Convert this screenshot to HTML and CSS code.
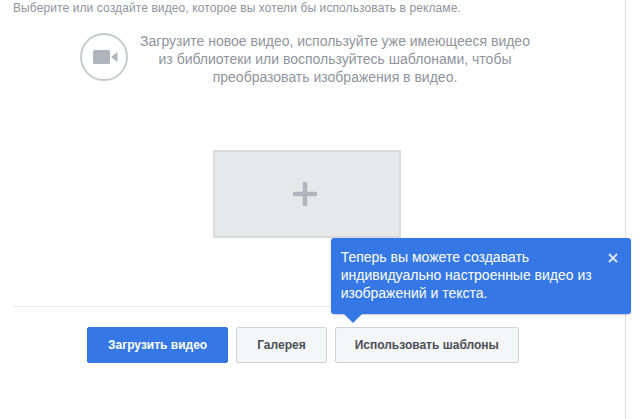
FILE: index.html
```html
<!DOCTYPE html>
<html lang="ru">
<head>
<meta charset="utf-8">
<title>Видео</title>
<link rel="stylesheet" href="styles.css">
</head>
<body>
<main class="panel">
  <p class="lead">Выберите или создайте видео, которое вы хотели бы использовать в рекламе.</p>
  <section class="intro">
    <div class="intro-icon">
      <svg width="48" height="48" viewBox="0 0 48 48" aria-hidden="true">
        <circle cx="24" cy="24" r="23" fill="none" stroke="#c4c7cc" stroke-width="1.8"/>
        <rect x="13" y="17" width="17" height="14" rx="1.5" fill="#b0b4bc"/>
        <path d="M31 24l6.500-5v10z" fill="#b0b4bc"/>
      </svg>
    </div>
    <p class="intro-text">Загрузите новое видео, используйте уже имеющееся видео<br>из библиотеки или воспользуйтесь шаблонами, чтобы<br>преобразовать изображения в видео.</p>
  </section>
  <div class="drop-wrap">
    <div class="drop">
      <svg width="24" height="24" viewBox="0 0 24 24" aria-hidden="true">
        <path d="M12 1.500v21M1.500 12h21" stroke="#b0b4bc" stroke-width="4.500" stroke-linecap="round" fill="none"/>
      </svg>
    </div>
  </div>
  <div class="actions">
    <button class="btn btn-primary" type="button">Загрузить видео</button>
    <button class="btn" type="button">Галерея</button>
    <div class="tip-anchor">
      <button class="btn btn-tight" type="button">Использовать шаблоны</button>
      <div class="tip">
        <p class="tip-text">Теперь вы можете создавать индивидуально настроенные видео из изображений и текста.</p>
        <svg class="tip-close" width="10" height="10" viewBox="0 0 10 10" aria-hidden="true">
          <path d="M1 1l8 8M9 1l-8 8" stroke="#dfe8f8" stroke-width="1.800" fill="none"/>
        </svg>
      </div>
    </div>
  </div>
</main>
</body>
</html>
```

FILE: styles.css
```css
html, body {
  margin: 0;
  padding: 0;
  background: #fff;
}
body {
  width: 639px;
  height: 419px;
  overflow: hidden;
  font-family: "Liberation Sans", Arial, sans-serif;
}
.panel {
  width: 612px;
  height: 419px;
  margin-left: 13px;
  border-right: 1px solid #dddfe2;
  box-sizing: content-box;
}
.lead {
  margin: 0;
  padding-top: 1px;
  font-size: 12px;
  line-height: 14px;
  letter-spacing: 0.1px;
  color: #90949c;
}
.intro {
  display: flex;
  align-items: flex-start;
  margin-top: 18px;
  padding-left: 67px;
}
.intro-icon {
  width: 48px;
  height: 48px;
}
.intro-text {
  margin: -1px 0 1px 12px;
  width: 390px;
  text-align: center;
  font-size: 14px;
  line-height: 18px;
  color: #90949c;
}
.drop-wrap {
  margin-top: 63px;
  padding-left: 200px;
}
.drop {
  width: 188px;
  height: 88px;
  box-sizing: border-box;
  padding-right: 4px;
  background: #e7e8ea;
  border: 2px solid #dadbdd;
  display: flex;
  align-items: center;
  justify-content: center;
}
.actions {
  display: flex;
  gap: 8px;
  margin-top: 68px;
  padding: 20px 0 0 74px;
  border-top: 1px solid #e9ebee;
}
.btn {
  height: 36px;
  padding: 0 20px;
  box-sizing: border-box;
  font-family: inherit;
  font-size: 12px;
  font-weight: bold;
  color: #4b4f56;
  background: #f5f6f7;
  border: 1px solid #ced0d4;
  border-radius: 2px;
}
.btn-primary {
  color: #fff;
  background: #3578e5;
  border-color: #3578e5;
}
.btn-tight {
  padding: 0 19px;
}
.tip-anchor {
  position: relative;
}
.tip {
  position: absolute;
  left: -4px;
  bottom: 49px;
  width: 300px;
  height: 76px;
  box-sizing: border-box;
  padding: 10px 10px;
  background: #3578e5;
  border-radius: 3px;
  box-shadow: 0 1px 2px rgba(0,0,0,.2);
}
.tip::after {
  content: "";
  position: absolute;
  left: 13px;
  bottom: -9px;
  border-left: 9.5px solid transparent;
  border-right: 9.5px solid transparent;
  border-top: 9px solid #3578e5;
}
.tip-text {
  margin: 0;
  width: 262px;
  font-size: 14px;
  line-height: 18px;
  color: #fff;
}
.tip-close {
  position: absolute;
  top: 15px;
  right: 13px;
}
```
